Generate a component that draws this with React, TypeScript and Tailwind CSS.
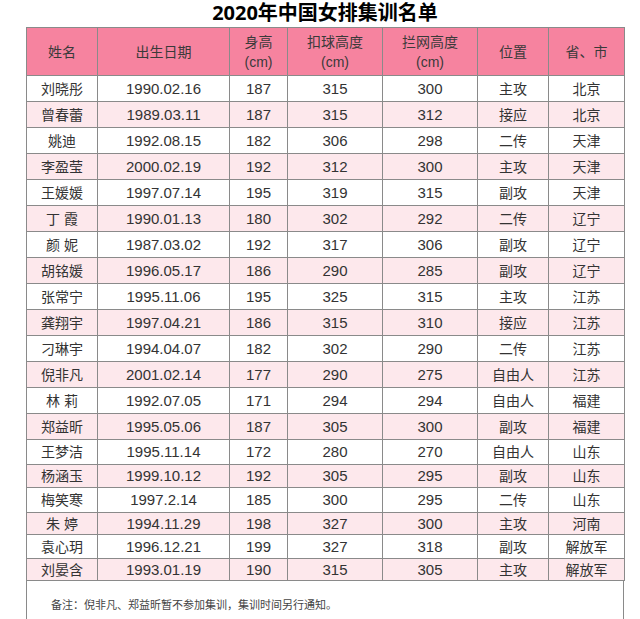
import React from 'react';

const rows = [
  ['刘晓彤', '1990.02.16', '187', '315', '300', '主攻', '北京'],
  ['曾春蕾', '1989.03.11', '187', '315', '312', '接应', '北京'],
  ['姚迪', '1992.08.15', '182', '306', '298', '二传', '天津'],
  ['李盈莹', '2000.02.19', '192', '312', '300', '主攻', '天津'],
  ['王媛媛', '1997.07.14', '195', '319', '315', '副攻', '天津'],
  ['丁 霞', '1990.01.13', '180', '302', '292', '二传', '辽宁'],
  ['颜 妮', '1987.03.02', '192', '317', '306', '副攻', '辽宁'],
  ['胡铭媛', '1996.05.17', '186', '290', '285', '副攻', '辽宁'],
  ['张常宁', '1995.11.06', '195', '325', '315', '主攻', '江苏'],
  ['龚翔宇', '1997.04.21', '186', '315', '310', '接应', '江苏'],
  ['刁琳宇', '1994.04.07', '182', '302', '290', '二传', '江苏'],
  ['倪非凡', '2001.02.14', '177', '290', '275', '自由人', '江苏'],
  ['林 莉', '1992.07.05', '171', '294', '294', '自由人', '福建'],
  ['郑益昕', '1995.05.06', '187', '305', '300', '副攻', '福建'],
  ['王梦洁', '1995.11.14', '172', '280', '270', '自由人', '山东'],
  ['杨涵玉', '1999.10.12', '192', '305', '295', '副攻', '山东'],
  ['梅笑寒', '1997.2.14', '185', '300', '295', '二传', '山东'],
  ['朱 婷', '1994.11.29', '198', '327', '300', '主攻', '河南'],
  ['袁心玥', '1996.12.21', '199', '327', '318', '副攻', '解放军'],
  ['刘晏含', '1993.01.19', '190', '315', '305', '主攻', '解放军'],
];

// the last rows in the picture are a bit squeezed
const heights = [
  'h-[26px]', 'h-[26px]', 'h-[26px]', 'h-[26px]', 'h-[26px]',
  'h-[26px]', 'h-[26px]', 'h-[26px]', 'h-[26px]', 'h-[26px]',
  'h-[26px]', 'h-[26px]', 'h-[26px]', 'h-[26px]', 'h-[25px]',
  'h-[23px]', 'h-[25px]', 'h-[22px]', 'h-[24px]', 'h-[22px]',
];

const widths = ['w-[71px]', 'w-[132px]', 'w-[58px]', 'w-[95px]', 'w-[95px]', 'w-[71px]', 'w-[76px]'];

export default function App() {
  const font = { fontFamily: '"Liberation Sans", "Noto Sans CJK SC", sans-serif' };

  return (
    <div className="w-[640px] h-[619px] bg-white overflow-hidden" style={font}>
      <h1
        className="ml-[26px] w-[598px] h-[27px] text-center text-[20px] leading-[26px] font-bold text-black"
        style={{ fontFamily: '"Open Sans", "Noto Sans CJK SC", sans-serif' }}
      >
        2020年中国女排集训名单
      </h1>
      <table className="ml-[26px] w-[598px] table-fixed border-collapse text-[14px] text-[#333]">
        <thead>
          <tr className="h-[48px] bg-[#f6839f]">
            {['姓名', '出生日期', '身高\n(cm)', '扣球高度\n(cm)', '拦网高度\n(cm)', '位置', '省、市'].map((h, i) => (
              <th
                key={i}
                className={`${widths[i]} border border-[#8a8a8a] p-0 text-center text-[14px] leading-[20px] font-normal whitespace-pre-line text-[#3a3a3a]`}
              >
                {h}
              </th>
            ))}
          </tr>
        </thead>
        <tbody>
          {rows.map((r, i) => (
            <tr key={r[0]} className={`${heights[i]} ${i % 2 === 1 ? 'bg-[#fde8ec]' : 'bg-white'}`}>
              {r.map((c, j) => (
                <td
                  key={j}
                  className={`border border-[#8a8a8a] p-0 text-center leading-[18px] ${j === 0 || j >= 5 ? 'text-[14px]' : 'text-[15px]'}`}
                >
                  {c}
                </td>
              ))}
            </tr>
          ))}
        </tbody>
      </table>
      <div className="ml-[26px] w-[598px] h-[60px] border-x border-[#8a8a8a] pl-[24px] pt-[16px] text-[11px] text-[#444]">
        备注：倪非凡、郑益昕暂不参加集训，集训时间另行通知。
      </div>
    </div>
  );
}
